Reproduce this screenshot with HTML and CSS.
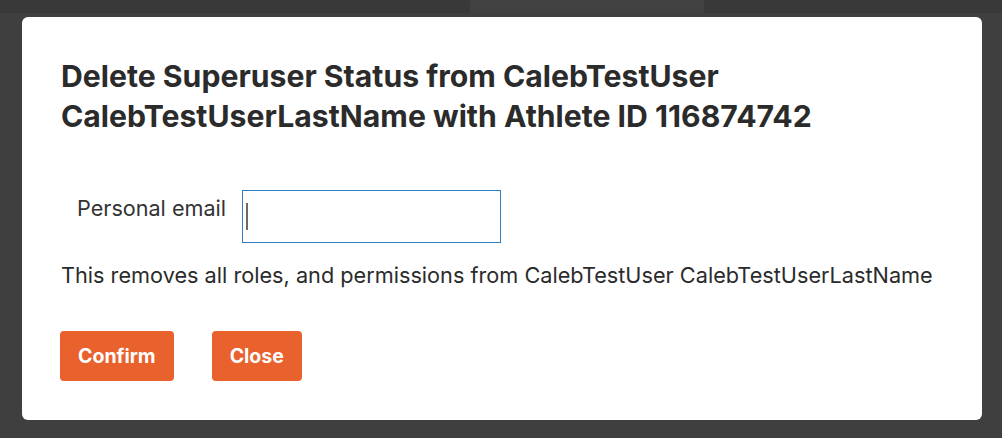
FILE: index.html
```html
<!DOCTYPE html>
<html>
<head>
<meta charset="utf-8">
<link rel="stylesheet" href="styles.css">
</head>
<body>
<div class="topbar">
  <div class="seg seg-left"></div>
  <div class="seg seg-mid"></div>
  <div class="seg seg-right"></div>
</div>
<div class="modal">
  <h2 class="title">Delete Superuser Status from CalebTestUser CalebTestUserLastName with Athlete ID 116874742</h2>
  <div class="field">
    <label class="label" for="email">Personal email</label>
    <div class="input-wrap">
      <input class="input" id="email" type="text">
      <span class="caret"></span>
    </div>
  </div>
  <p class="desc">This removes all roles, and permissions from CalebTestUser CalebTestUserLastName</p>
  <div class="actions">
    <button class="btn">Confirm</button>
    <button class="btn">Close</button>
  </div>
</div>
</body>
</html>
```
FILE: styles.css
```css
html, body {
  margin: 0;
  padding: 0;
}
body {
  background: #3f3f3f;
  width: 1002px;
  height: 438px;
  overflow: hidden;
  font-family: Inter, "Liberation Sans", Arial, sans-serif;
  color: #2b2b2b;
}
.topbar {
  display: flex;
  height: 13px;
}
.seg-left {
  width: 470px;
  background: #393939;
}
.seg-mid {
  width: 234px;
  background: #414141;
}
.seg-right {
  flex: 1;
  background: #393939;
}
.modal {
  box-sizing: border-box;
  margin: 4px 0 0 22px;
  width: 960px;
  height: 403px;
  background: #ffffff;
  border-radius: 6px;
  padding: 39px 39px 0 39px;
}
.title {
  margin: 0;
  font-size: 30.2px;
  line-height: 40px;
  font-weight: 700;
  color: #2b2b2b;
  width: 800px;
}
.field {
  display: flex;
  align-items: flex-start;
  margin-top: 54px;
}
.label {
  font-size: 21.6px;
  line-height: 24px;
  color: #333;
  margin-left: 16px;
  margin-top: 6px;
  width: 165px;
}
.input-wrap {
  position: relative;
}
.input {
  box-sizing: border-box;
  display: block;
  width: 259px;
  height: 53px;
  margin: 0;
  border: 1px solid #2f7fc1;
  border-radius: 0;
  outline: none;
  padding: 0 8px;
  font-size: 18px;
  caret-color: transparent;
}
.caret {
  position: absolute;
  left: 4px;
  top: 13px;
  width: 2px;
  height: 27px;
  background: #6a6a6a;
}
.desc {
  margin: 20px 0 0 0;
  font-size: 21.7px;
  line-height: 24px;
  color: #2b2b2b;
}
.actions {
  display: flex;
  gap: 38px;
  margin-top: 44px;
  margin-left: -1px;
}
.btn {
  height: 50px;
  border: none;
  border-radius: 4px;
  background: #e9612c;
  color: #ffffff;
  font-family: Inter, "Liberation Sans", Arial, sans-serif;
  font-weight: 700;
  font-size: 19.5px;
  padding: 0 18px;
  cursor: pointer;
}
```
